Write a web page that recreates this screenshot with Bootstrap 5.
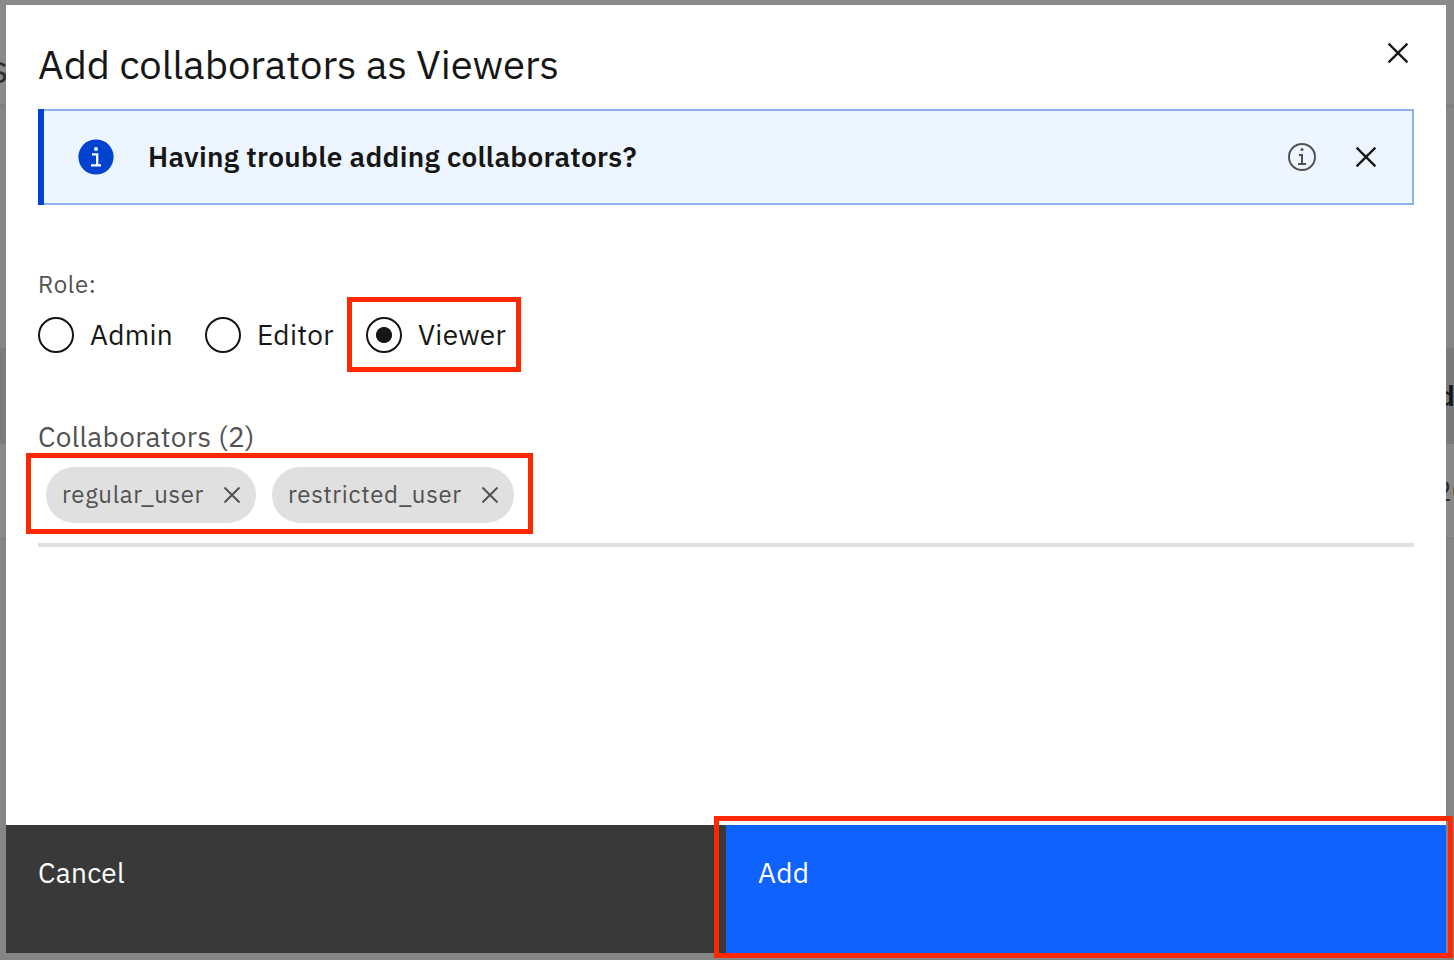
<!DOCTYPE html>
<html lang="en">
<head>
<meta charset="utf-8">
<meta name="viewport" content="width=device-width, initial-scale=1">
<title>Add collaborators as Viewers</title>
<link href="https://cdn.jsdelivr.net/npm/bootstrap@5.3.0/dist/css/bootstrap.min.css" rel="stylesheet">
<style>
  body { font-family: "IBM Plex Sans", Roboto, sans-serif; font-size: 28px; line-height: 36px; letter-spacing: .3px; color: #161616; background: #858585; }
  .page-frame { width: 1454px; height: 960px; padding: 5px 8px 7px 6px; }
  .backdrop-page { inset: 0; z-index: 0; color: #303030; }
  .band-top { height: 108px; background: #8a8a8a; border-bottom: 4px solid #808080; }
  .band-mid { height: 240px; background: #868686; }
  .band-head { height: 96px; background: #7b7b7b; color: #161616; }
  .band-row { height: 95px; background: #8a8a8a; border-bottom: 1px solid #7c7c7c; }
  .peek-s { left: -11px; top: 48px; font-size: 40px; line-height: 40px; } .peek-d { left: 1438px; top: 30px; font-weight: 600; } .peek-date { left: 1435px; top: 29px; letter-spacing: 0; }
  .dialog-box { z-index: 1; background: #fff; }
  .dialog-main { padding: 35px 32px 0; }
  h1 { font-size: 40px; line-height: 48px; letter-spacing: 0; font-weight: 400; }
  .dialog-close { margin: -22px 4px 0 0; }
  .notice { margin-top: 21px; height: 96px; border: 2px solid #8fb0ee; border-left: 0; background: #edf5ff; padding: 0 30px 0 40px; position: relative; }
  .notice::before { content: ""; position: absolute; left: 0; top: -2px; bottom: -2px; width: 6px; background: #0043ce; }
  .notice strong { font-weight: 600; margin-left: 34px; }
  .notice-close { margin-left: 32px; }
  .role-label { font-size: 24px; line-height: 32px; letter-spacing: .64px; color: #525252; margin-top: 63px; }
  .dot { appearance: none; width: 36px; height: 36px; border: 2px solid #161616; border-radius: 50%; margin: 0 16px 0 0; }
  .dot:checked { background: radial-gradient(circle, #161616 7.6px, transparent 8.4px); }
  .roles { margin-top: 17px; height: 36px; }
  .role-a { width: 167px; } .role-b { width: 161px; }
  .people-label { color: #525252; margin-top: 66px; }
  .people { margin-top: 12px; padding-left: 8px; height: 80px; border-bottom: 4px solid #e0e0e0; }
  .chip { height: 56px; border-radius: 28px; background: #e0e0e0; color: #525252; font-size: 24px; padding: 0 16px; letter-spacing: .64px; }
  .chip span { margin-top: -2px; }
  .chip-a { width: 210px; } .chip-b { width: 242px; }
  .dialog-foot { height: 128px; }
  .foot-btn { font: inherit; letter-spacing: inherit; color: #fff; border: 0; padding: 30px 32px; text-align: left; }
  .foot-cancel { background: #393939; }
  .foot-add { background: #0f62fe; }
  .callout { position: absolute; border: 5px solid #ff2800; z-index: 3; pointer-events: none; }
  .callout-role { left: 347px; top: 297px; width: 174px; height: 75px; }
  .callout-people { left: 26px; top: 453px; width: 507px; height: 81px; }
  .callout-add { left: 714px; top: 816px; width: 739px; height: 142px; }
</style>
</head>
<body class="overflow-hidden">
<div class="page-frame position-relative d-flex overflow-hidden">
  <div class="backdrop-page position-absolute" aria-hidden="true">
    <div class="band-top position-relative"><span class="peek-s position-absolute">s</span></div>
    <div class="band-mid"></div>
    <div class="band-head position-relative"><span class="peek-d position-absolute">d</span></div>
    <div class="band-row position-relative"><span class="peek-date position-absolute">20</span></div>
  </div>
  <section class="dialog-box position-relative d-flex flex-column flex-fill" role="dialog" aria-labelledby="dialogTitle">
    <div class="dialog-main flex-grow-1">
      <header class="d-flex justify-content-between align-items-center">
        <h1 id="dialogTitle" class="m-0">Add collaborators as Viewers</h1>
        <svg class="dialog-close" width="24" height="24" viewBox="0 0 24 24"><path d="M2.6 2.6 21.4 21.4M21.4 2.6 2.6 21.4" stroke="#161616" stroke-width="2.3"/></svg>
      </header>
      <div class="notice d-flex align-items-center">
        <svg width="36" height="36" viewBox="0 0 36 36"><circle cx="18" cy="18" r="17.6" fill="#0043ce"/><circle cx="18" cy="10" r="2" fill="#fff"/><path d="M14 15.3h5.2v10.4M13 26.4h10" stroke="#fff" stroke-width="2.3" fill="none"/></svg>
        <strong class="flex-grow-1">Having trouble adding collaborators?</strong>
        <svg width="32" height="32" viewBox="0 0 32 32"><circle cx="16" cy="16" r="13" fill="none" stroke="#525252" stroke-width="2"/><circle cx="16" cy="8.6" r="1.5" fill="#525252"/><path d="M13 14h3v9M12 23h8" stroke="#525252" stroke-width="2" fill="none"/></svg>
        <svg class="notice-close" width="32" height="32" viewBox="0 0 32 32"><path d="M6.6 6.6 25.4 25.4M25.4 6.6 6.6 25.4" stroke="#161616" stroke-width="2.3"/></svg>
      </div>
      <div class="role-label">Role:</div>
      <div class="roles d-flex">
        <label class="role-a d-flex align-items-center"><input class="dot" type="radio" name="role">Admin</label>
        <label class="role-b d-flex align-items-center"><input class="dot" type="radio" name="role">Editor</label>
        <label class="role-c d-flex align-items-center"><input class="dot" type="radio" name="role" checked>Viewer</label>
      </div>
      <div class="people-label">Collaborators (2)</div>
      <div class="people d-flex gap-3">
        <div class="chip chip-a d-flex align-items-center justify-content-between"><span>regular_user</span><svg width="16" height="16" viewBox="0 0 16 16"><path d="M.5.5 15.5 15.5M15.5.5.5 15.5" stroke="#525252" stroke-width="2"/></svg></div>
        <div class="chip chip-b d-flex align-items-center justify-content-between"><span>restricted_user</span><svg width="16" height="16" viewBox="0 0 16 16"><path d="M.5.5 15.5 15.5M15.5.5.5 15.5" stroke="#525252" stroke-width="2"/></svg></div>
      </div>
    </div>
    <footer class="dialog-foot d-flex">
      <button class="foot-btn foot-cancel w-50 d-flex" type="button">Cancel</button>
      <button class="foot-btn foot-add w-50 d-flex" type="button">Add</button>
    </footer>
  </section>
  <div class="callout callout-role"></div>
  <div class="callout callout-people"></div>
  <div class="callout callout-add"></div>
</div>
<script src="https://cdn.jsdelivr.net/npm/bootstrap@5.3.0/dist/js/bootstrap.bundle.min.js"></script>
</body>
</html>
